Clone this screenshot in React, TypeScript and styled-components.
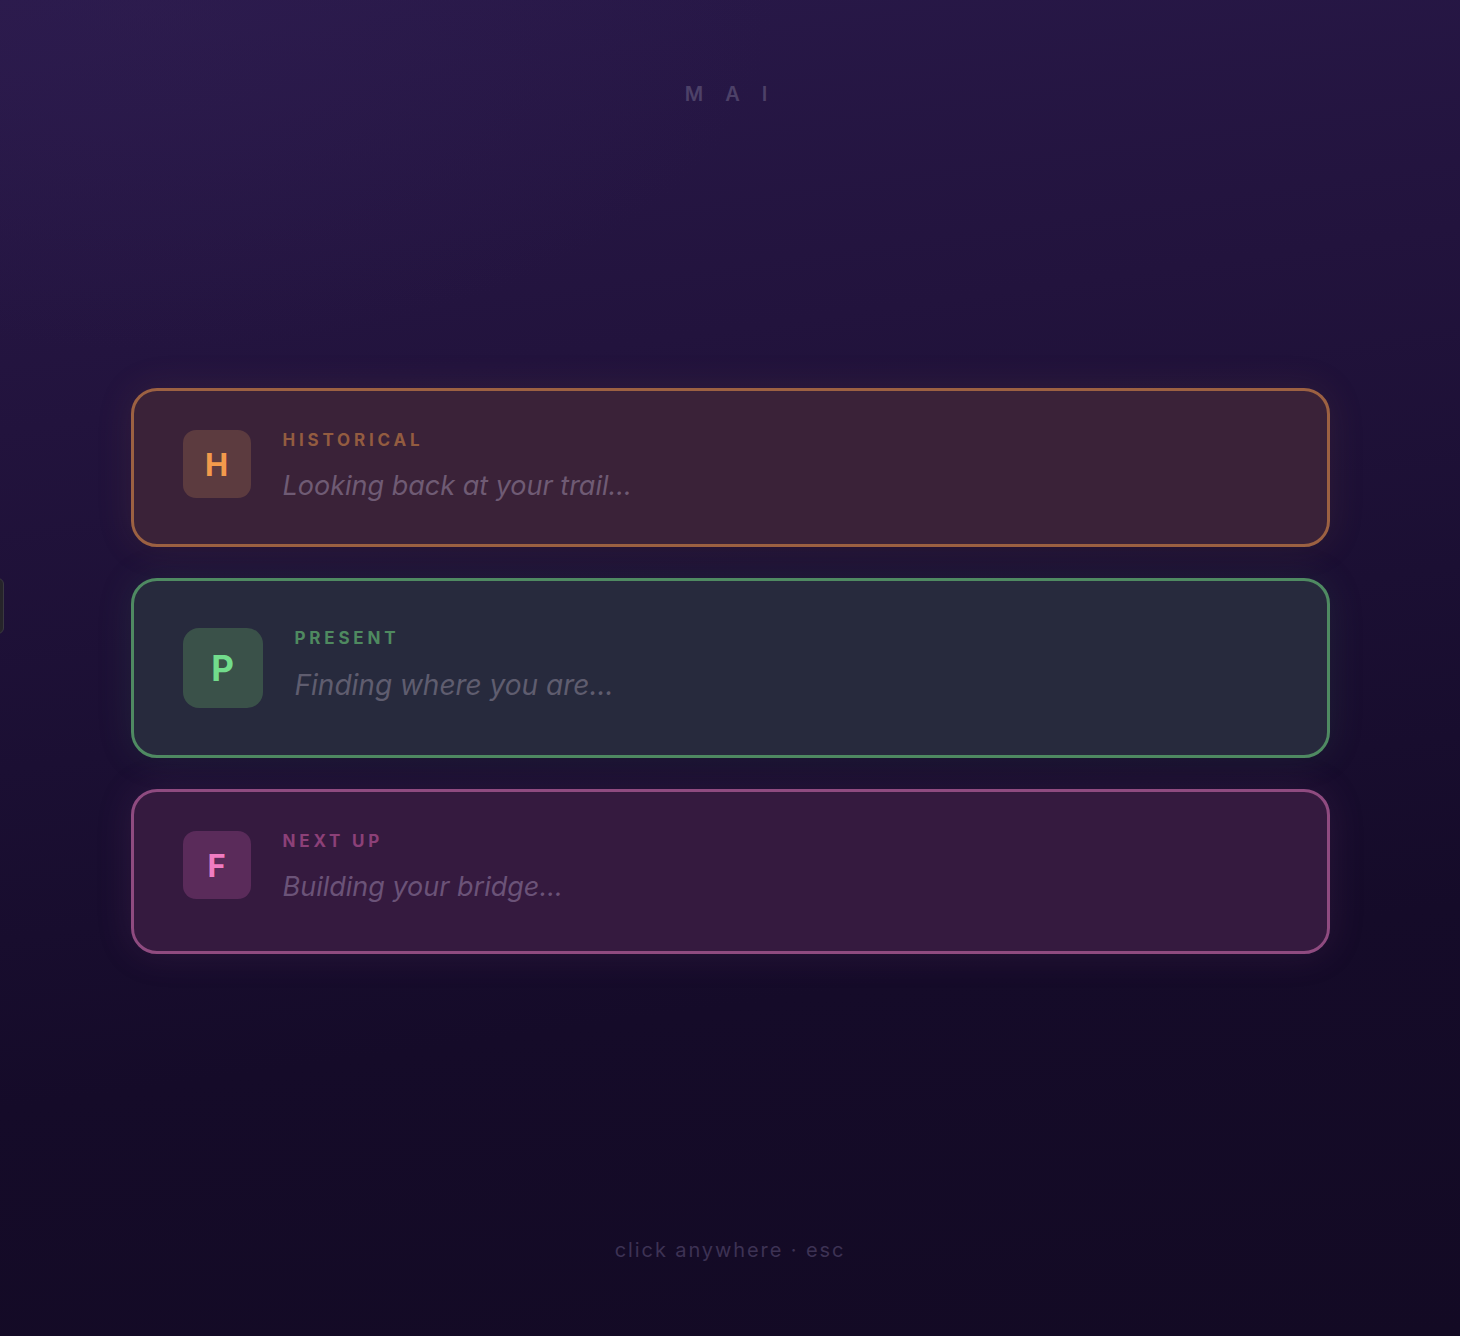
import React from "react";
import styled, { createGlobalStyle } from "styled-components";

const GlobalStyle = createGlobalStyle`
  html, body {
    margin: 0;
    padding: 0;
    background: #170d2c;
  }
  body {
    font-family: Inter, "Noto Sans", "Liberation Sans", sans-serif;
  }
  * { box-sizing: border-box; }
`;

const Page = styled.div`
  position: relative;
  width: 100%;
  min-height: 1336px;
  overflow: hidden;
  display: flex;
  flex-direction: column;
  align-items: center;
  background:
    radial-gradient(ellipse 900px 500px at 10% 0%, rgba(48, 30, 82, 0.5), rgba(48, 30, 82, 0) 70%),
    linear-gradient(172deg, #29194a 0%, #22133d 28%, #1b0f33 50%, #150b29 72%, #130a24 100%);
`;

const Brand = styled.div`
  margin-top: 82px;
  padding-left: 14px;
  font-size: 20px;
  line-height: 24px;
  font-weight: 600;
  letter-spacing: 22px;
  color: #4d4168;
`;

const Stack = styled.div`
  margin-top: 282px;
  width: 1199px;
  display: flex;
  flex-direction: column;
  gap: 31px;
`;

type Tone = {
  border: string;
  bg: string;
  glow: string;
  iconBg: string;
  letter: string;
  label: string;
  text: string;
};

const Card = styled.div<{ $tone: Tone; $pad: string }>`
  display: flex;
  align-items: flex-start;
  gap: 32px;
  padding: ${(p) => p.$pad};
  border: 3px solid ${(p) => p.$tone.border};
  border-radius: 26px;
  background: ${(p) => p.$tone.bg};
  box-shadow: 0 0 36px ${(p) => p.$tone.glow};
`;

const Badge = styled.div<{ $tone: Tone; $size: number }>`
  flex: none;
  width: ${(p) => p.$size}px;
  height: ${(p) => p.$size}px;
  border-radius: ${(p) => (p.$size > 70 ? 16 : 13)}px;
  background: ${(p) => p.$tone.iconBg};
  color: ${(p) => p.$tone.letter};
  display: flex;
  align-items: center;
  justify-content: center;
  font-size: ${(p) => (p.$size > 70 ? 35 : 31)}px;
  font-weight: 700;
`;

const Body = styled.div`
  display: flex;
  flex-direction: column;
  gap: 20px;
`;

const Label = styled.div<{ $tone: Tone }>`
  font-size: 17px;
  line-height: 20px;
  font-weight: 700;
  letter-spacing: 3.8px;
  color: ${(p) => p.$tone.label};
`;

const Line = styled.div<{ $tone: Tone; $big: boolean }>`
  font-size: ${(p) => (p.$big ? 28 : 27)}px;
  line-height: ${(p) => (p.$big ? 34 : 32)}px;
  font-style: italic;
  font-weight: 400;
  color: ${(p) => p.$tone.text};
`;

const Footer = styled.div`
  margin-top: auto;
  margin-bottom: 74px;
  font-size: 20px;
  line-height: 24px;
  letter-spacing: 1.9px;
  color: #3d3254;
`;

const EdgeTab = styled.div`
  position: absolute;
  left: -20px;
  top: 578px;
  width: 24px;
  height: 56px;
  border-radius: 6px;
  background: #26242a;
  border: 1px solid #3a3840;
`;

const tones: Record<string, Tone> = {
  h: {
    border: "#9c6142",
    bg: "#3a2238",
    glow: "rgba(156, 97, 66, 0.14)",
    iconBg: "#5c3b3f",
    letter: "#f29a4c",
    label: "#935c40",
    text: "#6f5b74",
  },
  p: {
    border: "#4f8a62",
    bg: "#272a3d",
    glow: "rgba(79, 138, 98, 0.14)",
    iconBg: "#3a5149",
    letter: "#72dc8c",
    label: "#4f8a60",
    text: "#5f5d6f",
  },
  f: {
    border: "#8f4b80",
    bg: "#351a3f",
    glow: "rgba(143, 75, 128, 0.16)",
    iconBg: "#5a2b5a",
    letter: "#f07cc2",
    label: "#8c4078",
    text: "#6b5378",
  },
};

const items = [
  { key: "h", letter: "H", label: "HISTORICAL", text: "Looking back at your trail...", big: false, pad: "39px 48px 42px 49px" },
  { key: "p", letter: "P", label: "PRESENT", text: "Finding where you are...", big: true, pad: "47px 48px 47px 49px" },
  { key: "f", letter: "F", label: "NEXT UP", text: "Building your bridge...", big: false, pad: "39px 48px 48px 49px" },
];

export default function App() {
  return (
    <>
      <GlobalStyle />
      <Page>
        <Brand>MAI</Brand>
        <Stack>
          {items.map((it) => {
            const tone = tones[it.key];
            return (
              <Card key={it.key} $tone={tone} $pad={it.pad}>
                <Badge $tone={tone} $size={it.big ? 80 : 68}>
                  {it.letter}
                </Badge>
                <Body>
                  <Label $tone={tone}>{it.label}</Label>
                  <Line $tone={tone} $big={it.big}>
                    {it.text}
                  </Line>
                </Body>
              </Card>
            );
          })}
        </Stack>
        <Footer>click anywhere · esc</Footer>
        <EdgeTab />
      </Page>
    </>
  );
}
